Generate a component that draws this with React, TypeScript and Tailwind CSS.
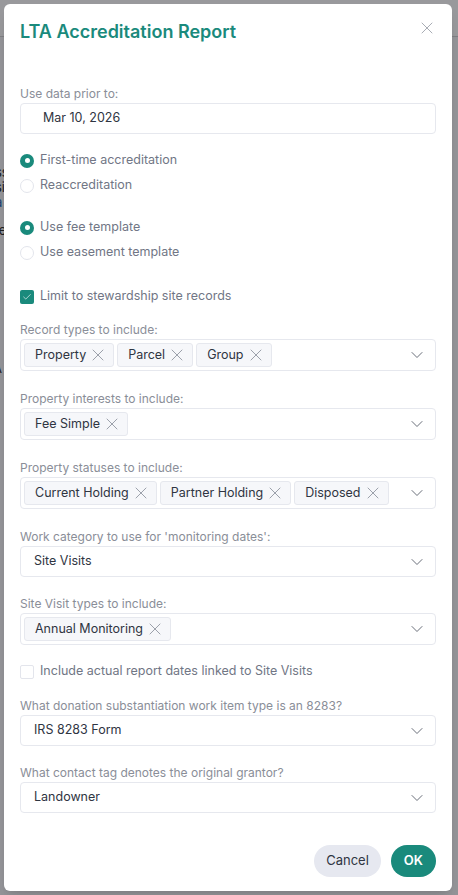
import { Check, ChevronDown, X } from "lucide-react";

const font = { fontFamily: "Inter, 'Noto Sans', sans-serif" };

function Label({ children }: { children: React.ReactNode }) {
  return <div className="mb-[2px] text-[12px] leading-[14px] text-[#8a8e98]">{children}</div>;
}

function Radio({ label, checked }: { label: string; checked?: boolean }) {
  return (
    <label className="flex h-[25px] items-center gap-[6px]">
      {checked ? (
        <span className="flex size-[14px] items-center justify-center rounded-full bg-[#1a8a7c]">
          <span className="size-[5px] rounded-full bg-white" />
        </span>
      ) : (
        <span className="size-[14px] rounded-full border border-[#e3e5ec] bg-white" />
      )}
      <span className="text-[12.5px] text-[#717685]">{label}</span>
    </label>
  );
}

function Checkbox({ label, checked }: { label: string; checked?: boolean }) {
  return (
    <label className="flex h-[25px] items-center gap-[6px]">
      {checked ? (
        <span className="flex size-[14px] items-center justify-center rounded-[2px] bg-[#1a8a7c]">
          <Check className="size-[10px] text-white" strokeWidth={1.5} />
        </span>
      ) : (
        <span className="size-[14px] rounded-[2px] border border-[#e3e5ec] bg-white" />
      )}
      <span className="text-[12.5px] text-[#717685]">{label}</span>
    </label>
  );
}

function Tag({ label }: { label: string }) {
  return (
    <span className="flex h-[24px] items-center gap-[2px] rounded-[3px] border border-[#e6e8ee] bg-[#f6f7fa] pl-[10px] pr-[5px] text-[12.5px] text-[#2f3542]">
      {label}
      <X className="size-[20px] text-[#9398a3]" strokeWidth={1.1} />
    </span>
  );
}

function MultiSelect({ tags }: { tags: string[] }) {
  return (
    <div className="flex h-[32px] items-center rounded-[4px] border border-[#e6e8ee] bg-white pl-[3px] pr-[8px]">
      <div className="flex flex-1 gap-[3px]">
        {tags.map((t) => (
          <Tag key={t} label={t} />
        ))}
      </div>
      <ChevronDown className="size-[20px] text-[#5b606c]" strokeWidth={1.1} />
    </div>
  );
}

function Select({ value }: { value: string }) {
  return (
    <div className="flex h-[31px] items-center rounded-[4px] border border-[#e6e8ee] bg-white pr-[8px]">
      <span className="ml-[13px] flex-1 text-[12.5px] text-[#2f3542]">{value}</span>
      <ChevronDown className="size-[20px] text-[#5b606c]" strokeWidth={1.1} />
    </div>
  );
}

function Field({ label, children, className = "" }: { label: string; children: React.ReactNode; className?: string }) {
  return (
    <div className={className}>
      <Label>{label}</Label>
      {children}
    </div>
  );
}

export default function App() {
  return (
    <div style={font} className="relative h-[895px] w-[458px] overflow-hidden bg-[#f7f7f9]">
      {/* page behind the modal */}
      <div className="h-[37px] border-b border-[#cfcfd4] bg-white" />
      <div className="pt-[128px] text-[13px] leading-[15px] text-[#222]">
        <div className="-ml-[5px]">ss</div>
        <div className="-ml-[5px]">si</div>
        <div className="-ml-[5px] text-[#1a5fb4]">a</div>
        <div className="-ml-[6px] mt-[13px]">re</div>
        <div className="-ml-[3px] mt-[28px] text-[#1f7a3a]">i</div>
        <div className="-ml-[7px] mt-[80px]">A</div>
      </div>

      {/* overlay */}
      <div className="absolute inset-0 bg-[#1d1d24]/45 p-[4px] pr-[6px]">
        <div className="flex h-[887px] flex-col rounded-[6px] bg-white px-[16px] pt-[16px] shadow-lg">
          <div className="flex items-start justify-between">
            <h1 className="text-[18px] font-semibold leading-[24px] text-[#1a8a7c]">LTA Accreditation Report</h1>
            <X className="-mr-[1px] -mt-[2px] size-[20px] text-[#a0a4ad]" strokeWidth={1.1} />
          </div>

          <Field label="Use data prior to:" className="mt-[43px]">
            <div className="flex h-[31px] items-center rounded-[4px] border border-[#e6e8ee] bg-white pl-[22px] text-[12.5px] text-[#2f3542]">
              Mar 10, 2026
            </div>
          </Field>

          <div className="mt-[14px]">
            <Radio label="First-time accreditation" checked />
            <Radio label="Reaccreditation" />
          </div>

          <div className="mt-[17px]">
            <Radio label="Use fee template" checked />
            <Radio label="Use easement template" />
          </div>

          <div className="mt-[19px]">
            <Checkbox label="Limit to stewardship site records" checked />
          </div>

          <Field label="Record types to include:" className="mt-[14px]">
            <MultiSelect tags={["Property", "Parcel", "Group"]} />
          </Field>

          <Field label="Property interests to include:" className="mt-[21px]">
            <MultiSelect tags={["Fee Simple"]} />
          </Field>

          <Field label="Property statuses to include:" className="mt-[21px]">
            <MultiSelect tags={["Current Holding", "Partner Holding", "Disposed"]} />
          </Field>

          <Field label="Work category to use for 'monitoring dates':" className="mt-[21px]">
            <Select value="Site Visits" />
          </Field>

          <Field label="Site Visit types to include:" className="mt-[20px]">
            <MultiSelect tags={["Annual Monitoring"]} />
          </Field>

          <div className="mt-[14px]">
            <Checkbox label="Include actual report dates linked to Site Visits" />
          </div>

          <Field label="What donation substantiation work item type is an 8283?" className="mt-[15px]">
            <Select value="IRS 8283 Form" />
          </Field>

          <Field label="What contact tag denotes the original grantor?" className="mt-[20px]">
            <Select value="Landowner" />
          </Field>

          <div className="mt-[32px] flex justify-end gap-[10px]">
            <button className="h-[32px] rounded-full bg-[#e6e8f0] px-[12px] text-[13px] text-[#2f3542]">Cancel</button>
            <button className="h-[32px] rounded-full bg-[#1a8a7c] px-[13px] text-[13px] font-semibold text-white">OK</button>
          </div>
        </div>
      </div>
    </div>
  );
}
